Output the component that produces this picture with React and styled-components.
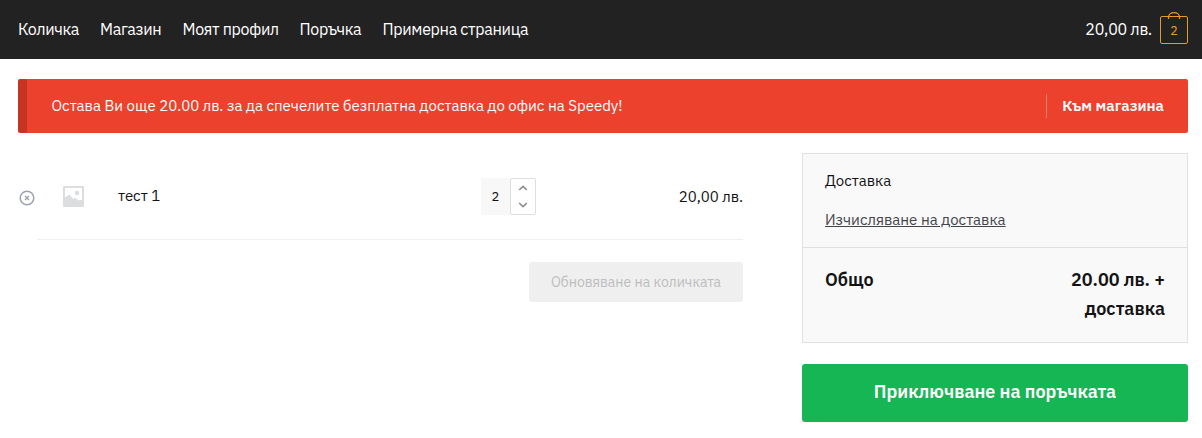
import React from "react";
import styled, { createGlobalStyle } from "styled-components";

const Global = createGlobalStyle`
  * { box-sizing: border-box; }
  body {
    margin: 0;
    background: #fff;
    color: #131315;
    font-family: "IBM Plex Sans", Roboto, "Noto Sans", sans-serif;
    font-size: 15px;
    line-height: 24px;
  }
  a { color: inherit; text-decoration: none; }
  button { font: inherit; border: 0; padding: 0; background: none; }
`;

const Label = styled.span`
  white-space: nowrap;
  letter-spacing: ${(p) => p.$track || 0}px;
`;

const Header = styled.header`
  display: flex;
  justify-content: space-between;
  align-items: center;
  height: 59px;
  padding: 0 14px 2px 18px;
  background: #222;
  color: #fff;
  font-size: 16px;
`;

const Nav = styled.nav`
  display: flex;
  gap: 21px;
`;

const NavLink = styled.a`
  width: ${(p) => p.$w}px;
  white-space: nowrap;
`;

const Cart = styled.a`
  display: flex;
  align-items: center;
  gap: 8px;
`;

const Bag = styled.span`
  position: relative;
  display: flex;
  width: 28px;
  height: 32px;
  padding-top: 3px;
  align-items: center;
  justify-content: center;
  color: #e8992b;
  font-size: 12.5px;
  margin-top: -1px;

  svg { position: absolute; inset: 0; }
`;

const Notice = styled.section`
  display: flex;
  align-items: center;
  justify-content: space-between;
  height: 54px;
  margin: 20px 14px 20px 18px;
  padding: 0 24px 0 24.5px;
  border-left: 9px solid #c73423;
  border-radius: 2px;
  background: #ec412c;
  color: #fff;
`;

const NoticeLink = styled.a`
  padding-left: 15px;
  border-left: 1px solid #f27c6d;
  font-weight: 600;
`;

const Main = styled.main`
  display: flex;
  justify-content: space-between;
  padding: 0 14px 0 18px;
`;

const CartForm = styled.section`
  display: flex;
  flex-direction: column;
  width: 725px;
`;

const CartRow = styled.div`
  display: grid;
  grid-template-columns: 45px 55px 363px 1fr auto;
  align-items: center;
  height: 86px;

  > svg { display: block; }
`;

const RemoveIcon = styled.svg`
  margin-top: 4px;
`;

const Subtotal = styled(Label)`
  padding-top: 2px;
`;

const Divider = styled.hr`
  width: 706px;
  height: 1px;
  margin: 0 0 22px 19px;
  border: 0;
  background: #efefef;
`;

const Quantity = styled.div`
  display: flex;
  width: 55px;
  height: 37px;
`;

const QuantityValue = styled.span`
  display: flex;
  align-items: center;
  justify-content: center;
  width: 29px;
  padding-top: 1px;
  background: #f8f8f8;
  font-size: 13px;
`;

const Stepper = styled.span`
  display: flex;
  flex-direction: column;
  justify-content: space-between;
  align-items: center;
  width: 26px;
  padding: 6px 0 6px;
  border: 1px solid #dedede;
  border-radius: 2px;
`;

const UpdateButton = styled.button`
  align-self: flex-end;
  width: 214px;
  height: 40px;
  border-radius: 3px;
  background: #efefef;
  color: #bdbdbd;
  font-size: 14px;
`;

const Sidebar = styled.aside`
  display: flex;
  flex-direction: column;
  gap: 21px;
  width: 386px;
`;

const Totals = styled.div`
  height: 190px;
  border: 1px solid #e1e1e1;
  background: #f9f9f9;
`;

const Shipping = styled.div`
  display: flex;
  flex-direction: column;
  align-items: flex-start;
  gap: 15px;
  height: 94px;
  padding: 15px 22px 0;
  border-bottom: 1px solid #e1e1e1;
`;

const ShippingLink = styled.a`
  color: #43454b;
  text-decoration: underline;
  text-underline-offset: 1px;
`;

const Total = styled.div`
  display: flex;
  justify-content: space-between;
  padding: 17px 22px 0;
  font-size: 18px;
  font-weight: 600;
  line-height: 29px;
`;

const TotalValue = styled.div`
  display: flex;
  flex-direction: column;
  align-items: flex-end;
`;

const Checkout = styled.button`
  height: 58px;
  padding-bottom: 2px;
  border-radius: 3px;
  background: #17b654;
  color: #fff;
  font-size: 18px;
  font-weight: 600;
`;

const links = [
  ["Количка", 61],
  ["Магазин", 61.5],
  ["Моят профил", 96],
  ["Поръчка", 62],
  ["Примерна страница", 146],
];

function Chevron({ up }) {
  return (
    <svg width="10" height="6" viewBox="0 0 10 6" fill="none" stroke="#8e8e8e" strokeWidth="1.7">
      <path d={up ? "M1.2 5 5 1.4 8.8 5" : "M1.2 1 5 4.6 8.8 1"} />
    </svg>
  );
}

export default function App() {
  return (
    <>
      <Global />
      <Header>
        <Nav>
          {links.map(([text, w]) => (
            <NavLink key={text} href="#" $w={w}><Label $track={-0.32}>{text}</Label></NavLink>
          ))}
        </Nav>
        <Cart href="#">
          <Label $track={-0.2}>20,00 лв.</Label>
          <Bag>
            <svg width="28" height="32" viewBox="0 0 28 32" fill="none" stroke="#e8992b">
              <rect x=".5" y="4.5" width="27" height="27" rx="1.5" />
              <path d="M8.5 7V5.5C8.5 2.5 11 .7 14 .7s5.5 1.8 5.5 4.8V7" strokeWidth="1.3" />
            </svg>
            2
          </Bag>
        </Cart>
      </Header>
      <Notice>
        <Label>Остава Ви още 20.00 лв. за да спечелите безплатна доставка до офис на Speedy!</Label>
        <NoticeLink href="#"><Label>Към магазина</Label></NoticeLink>
      </Notice>
      <Main>
        <CartForm>
          <CartRow>
            <RemoveIcon width="18" height="18" viewBox="0 0 18 18" fill="none" stroke="#9da3ae" strokeWidth="1.5">
              <circle cx="9" cy="9" r="6.8" />
              <path d="m7 7 4 4m0-4-4 4" strokeWidth="1.4" />
            </RemoveIcon>
            <svg width="21" height="21" viewBox="0 0 21 21">
              <rect width="21" height="21" rx="1" fill="#dcdddf" />
              <path d="M2 2h17v12.5l-1.5-.7-2 .8-3.2-2.8-2 1.2-4-4.5L2 11.5Z" fill="#fff" />
              <circle cx="14" cy="7" r="2.3" fill="#dcdddf" />
            </svg>
            <Label>тест 1</Label>
            <Quantity>
              <QuantityValue>2</QuantityValue>
              <Stepper><Chevron up /><Chevron /></Stepper>
            </Quantity>
            <Subtotal>20,00 лв.</Subtotal>
          </CartRow>
          <Divider />
          <UpdateButton><Label>Обновяване на количката</Label></UpdateButton>
        </CartForm>
        <Sidebar>
          <Totals>
            <Shipping>
              <Label>Доставка</Label>
              <ShippingLink href="#"><Label>Изчисляване на доставка</Label></ShippingLink>
            </Shipping>
            <Total>
              <Label>Общо</Label>
              <TotalValue>
                <Label>20.00 лв. +</Label>
                <Label>доставка</Label>
              </TotalValue>
            </Total>
          </Totals>
          <Checkout><Label>Приключване на поръчката</Label></Checkout>
        </Sidebar>
      </Main>
    </>
  );
}
